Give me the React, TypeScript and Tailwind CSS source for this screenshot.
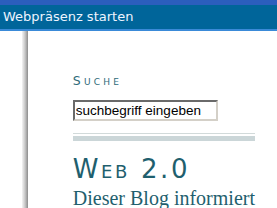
import React from 'react'

export default function App() {
  return (
    <div className="h-[208px] w-[277px] overflow-hidden bg-white flex flex-col">
      {/* window title */}
      <div className="h-[5px] bg-[#2b5ebd]" />
      <div className="h-[24px] bg-[#00659a] flex items-center pl-[3px]">
        <span className="text-[13px] text-[#eef4ff] font-['DejaVu_Sans',Verdana,sans-serif] leading-none">
          Webpräsenz starten
        </span>
      </div>
      <div className="h-[2px] bg-[#3a8ad8]" />

      <div className="flex flex-1">
        <div className="w-[22px]" />
        <div className="w-[6px] bg-gradient-to-r from-[#f4f4f4] via-[#c8c8c8] to-[#8c8c8c]" />
        <div className="flex-1 pl-[45px] pr-[22px]">
          <h3 className="mt-[44px] text-[12.5px] leading-none tracking-[3.2px] text-[#2f6b7a] font-['DejaVu_Sans',Verdana,sans-serif] [font-variant:small-caps]">
            Suche
          </h3>
          <input
            className="mt-[13px] block w-[145px] h-[21px] border-2 border-t-[#6a6a6a] border-l-[#6a6a6a] border-r-[#d4d0c8] border-b-[#d4d0c8] px-[1px] text-[13.5px] text-black font-['Liberation_Sans',Arial,sans-serif] outline-none"
            defaultValue="suchbegriff eingeben"
          />
          <div className="mt-[12px] h-[1px] bg-[#d2dada]" />
          <div className="mt-[2px] h-[5px] bg-[#cbd6d8]" />
          <h2 className="mt-[15px] text-[26px] leading-none tracking-[2.6px] text-[#1f5f6e] font-['DejaVu_Sans',Verdana,sans-serif] [font-variant:small-caps] whitespace-nowrap">
            Web 2.0
          </h2>
          <p className="mt-[6px] text-[20px] leading-none text-[#1f5f6e] font-['Liberation_Serif','Times_New_Roman',serif] whitespace-nowrap">
            Dieser Blog informiert
          </p>
        </div>
      </div>
    </div>
  )
}
